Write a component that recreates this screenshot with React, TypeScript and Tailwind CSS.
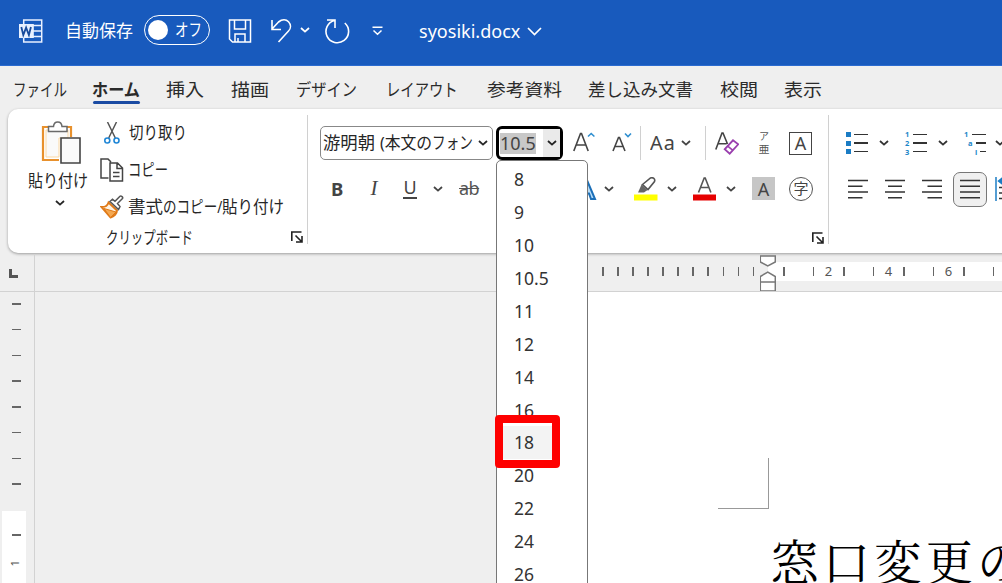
import React, { FunctionComponent, PropsWithChildren, useLayoutEffect, useRef, useState } from "react";

const fontSizes = ["8", "9", "10", "10.5", "11", "12", "14", "16", "18", "20", "22", "24", "26"];

// squeezes a label horizontally so that it fills exactly `width` pixels
const Fit: FunctionComponent<PropsWithChildren<{ width: number; className?: string }>> = ({
  width,
  className = "",
  children,
}) => {
  const ref = useRef<HTMLSpanElement>(null);
  const [scale, setScale] = useState(1);
  useLayoutEffect(() => {
    if (ref.current) setScale(width / ref.current.offsetWidth);
  }, [width]);
  return (
    <span className={"flex shrink-0 " + className} style={{ width }}>
      <span
        ref={ref}
        className="inline-block shrink-0 origin-left whitespace-nowrap"
        style={{ transform: `scaleX(${scale})` }}
      >
        {children}
      </span>
    </span>
  );
};

const Chevron: FunctionComponent<{ className?: string }> = ({ className = "" }) => (
  <svg className={"shrink-0 w-[10px] h-[6px] " + className} viewBox="0 0 10 6" fill="none" stroke="currentColor" strokeWidth="1.8">
    <path d="M1 1l4 3.6L9 1" />
  </svg>
);

const Launcher: FunctionComponent<{ className?: string }> = ({ className = "" }) => (
  <svg className={"shrink-0 w-3 h-3 text-[#222] " + className} viewBox="0 0 12 12" fill="none" stroke="currentColor" strokeWidth="1.6">
    <path d="M.8 10V1h9.7M4.5 4.5l6 6M11 5v6H5" />
  </svg>
);

const TitleBar: FunctionComponent = () => (
  <div className="flex items-center h-[66px] shrink-0 pb-[5px] bg-[#185abd] border-b border-[#2b6bd0] text-white">
    <svg className="ml-[19px] mt-[2px] w-6 h-6 shrink-0" viewBox="0 0 24 24" fill="none" stroke="#e8f0ff" strokeWidth="1.5">
      <path d="M4.7 5V1h18v22h-18v-4M14 6.5h8.7M14 12h8.7M14 17.5h8.7M14 5v14" />
      <rect x="0" y="5" width="14.3" height="14" fill="#e8f0ff" stroke="none" />
      <path d="M2.3 8l2 8 2.8-7.4L9.9 16l2-8" stroke="#174a9c" strokeWidth="1.8" />
    </svg>
    <Fit width={68} className="ml-[22px] mt-px text-[17px]">自動保存</Fit>
    <div className="flex items-center ml-[11px] w-[66px] h-[30px] border-[1.5px] border-white rounded-full">
      <div className="ml-[3px] w-5 h-5 rounded-full bg-white" />
      <Fit width={27} className="ml-[7px] text-[17px]">オフ</Fit>
    </div>
    <svg className="ml-[18px] mt-[2px] w-6 h-6 shrink-0" viewBox="0 0 24 24" fill="none" stroke="currentColor" strokeWidth="1.5">
      <path d="M1.5 1h21v22H4.5l-3-3zM6.5 1v9h11V1M7 23v-8h10v8M10 19v4" />
    </svg>
    <svg className="ml-[18px] mt-[2px] w-6 h-6 shrink-0" viewBox="0 0 24 24" fill="none" stroke="currentColor" strokeWidth="1.6">
      <path d="M2 1v9.5h9M2 10l6.5-7C12 .3 16 .2 18.500 2.700c2.800 3 2.400 6.800 0 9.300L8.500 23" />
    </svg>
    <Chevron className="ml-[6px]" />
    <svg className="ml-[14px] mt-[2px] w-[26px] h-[26px] shrink-0" viewBox="0 0 26 26" fill="none" stroke="currentColor" strokeWidth="1.6">
      <path d="M3 2h8v8M10.500 2.500A11.300 11.300 0 1 0 20.800 5" />
    </svg>
    <svg className="ml-[22px] mt-[2px] w-[11px] h-[10px] shrink-0" viewBox="0 0 11 10" fill="none" stroke="currentColor" strokeWidth="1.5">
      <path d="M.5 1.200h10M1.500 4.500l4 3.700 4-3.700" />
    </svg>
    <Fit width={101} className="ml-[36px] mt-[3px] text-[17.500px]">syosiki.docx</Fit>
    <svg className="ml-[7px] mt-[3px] w-[15px] h-[9px] shrink-0" viewBox="0 0 15 9" fill="none" stroke="currentColor" strokeWidth="1.7">
      <path d="M1 1l6.500 6.500L14 1" />
    </svg>
  </div>
);

const Tabs: FunctionComponent = () => (
  <div className="flex items-center h-[43px] shrink-0 pl-[13px] pt-[3px] text-[17.500px] text-[#2b2b2b]">
    <Fit width={54}>ファイル</Fit>
    <div className="relative ml-[25px]">
      <Fit width={48} className="font-bold">ホーム</Fit>
      <div className="absolute left-px -bottom-[2px] w-[47px] h-[3px] rounded-full bg-[#1a4ba3]" />
    </div>
    <Fit width={38} className="ml-[26px]">挿入</Fit>
    <Fit width={38} className="ml-[27px]">描画</Fit>
    <Fit width={61} className="ml-[27px]">デザイン</Fit>
    <Fit width={72} className="ml-[29px]">レイアウト</Fit>
    <Fit width={75} className="ml-[29px]">参考資料</Fit>
    <Fit width={105} className="ml-[26px]">差し込み文書</Fit>
    <Fit width={38} className="ml-[27px]">校閲</Fit>
    <Fit width={38} className="ml-[26px]">表示</Fit>
  </div>
);

const ClipboardGroup: FunctionComponent = () => (
  <div className="flex flex-col w-[300px] shrink-0 border-r border-[#d0d0d0] mt-[6px] h-[129px] text-[17px] text-[#262626]">
    <div className="flex h-[111px]">
      <div className="flex flex-col w-[84px] pl-[20px] pt-[6px]">
        <svg className="ml-[13px] w-10 h-11" viewBox="0 0 40 44" fill="none">
          <path d="M9 6H2v33h16M24 6h6v10" stroke="#e8912d" strokeWidth="2.200" />
          <path d="M5 9h22v8h-9v19H5z" fill="#fafafa" stroke="#fbd9a5" />
          <path d="M7.500 10.500V5.500h5c.5-6 8-6 8.500 0h5v5z" fill="#fff" stroke="#6a6a6a" strokeWidth="1.500" />
          <path d="M20 17h19v25H20z" fill="#fafafa" stroke="#444" strokeWidth="1.600" />
        </svg>
        <Fit width={60} className="mt-[3px] leading-[26px]">貼り付け</Fit>
        <Chevron className="ml-[27px] mt-[6px]" />
      </div>
      <div className="flex flex-col pl-[8px]">
        <div className="flex items-center h-[36px]">
          <svg className="ml-[4px] w-4 h-[22px]" viewBox="0 0 16 22" fill="none">
            <path d="M3.500 0l7.800 16M12.500 0L4.700 16" stroke="#555" strokeWidth="1.500" />
            <circle cx="3.300" cy="18.500" r="2.500" stroke="#1f86d6" strokeWidth="1.600" />
            <circle cx="12.500" cy="18.500" r="2.500" stroke="#1f86d6" strokeWidth="1.600" />
          </svg>
          <Fit width={58} className="ml-[9px]">切り取り</Fit>
        </div>
        <div className="flex items-center h-[37px]">
          <svg className="w-6 h-6" viewBox="0 0 24 24" fill="none" stroke="#444" strokeWidth="1.500">
            <path d="M8.500 20H1V1h7l3 3M10 5h7.500l5 5v13H10zM17 5v5.500h5.500M13 14.500h6.500M13 18.500h6.500" />
          </svg>
          <Fit width={40} className="ml-[4px]">コピー</Fit>
        </div>
        <div className="flex items-center h-[37px]">
          <svg className="w-6 h-6" viewBox="0 0 24 24" fill="none">
            <path d="M8.500 7.500l8.500 8c0 3-3 6-6.500 7L1.500 12c3 .2 6-1.500 7-4.500z" fill="#fff4e3" stroke="#e07a18" strokeWidth="1.900" />
            <path d="M4 13.500l12 3.500-5.500 5.500z" fill="#f5a850" stroke="#e07a18" />
            <path d="M10 6.500l8.500 8 1.500-3-2.500-3 5-5c1-1-1.500-3.200-2.500-2.200l-5 5-2.500-2z" fill="#fff" stroke="#555" strokeWidth="1.500" />
          </svg>
          <Fit width={35} className="ml-[4px]">書式</Fit>
          <Fit width={59}>のコピー/</Fit>
          <Fit width={62}>貼り付け</Fit>
        </div>
      </div>
    </div>
    <div className="flex items-center h-[24px]">
      <Fit width={87} className="ml-[98px] mt-[2px]">クリップボード</Fit>
      <Launcher className="ml-[98px]" />
    </div>
  </div>
);

const FontGroup: FunctionComponent = () => (
  <div className="flex flex-col w-[521px] shrink-0 border-r border-[#d0d0d0] mt-[6px] h-[129px] text-[#444]">
    <div className="flex items-center mt-[11px] ml-[12px] h-[34px]">
      <div className="flex items-center shrink-0 w-[173px] h-[34px] border border-[#888] rounded-[5px] text-[17px] text-[#262626]">
        <Fit width={52} className="ml-[2px]">游明朝</Fit>
        <Fit width={52} className="ml-[5px]">(本文の</Fit>
        <Fit width={41}>フォン</Fit>
        <Chevron className="ml-[5px]" />
      </div>
      <div className="flex items-center shrink-0 ml-[3px] w-[67px] h-[34px] border-[3px] border-black rounded-[6px] text-[17.5px]">
        <Fit width={36} className="ml-[1px] h-[21px] items-center bg-[#c8c8c8]">10.5</Fit>
        <div className="flex items-center justify-center ml-auto w-[17px] h-full bg-[#eaeaea] text-[#222]">
          <Chevron />
        </div>
      </div>
      <svg className="shrink-0 ml-[10px] w-6 h-6" viewBox="0 0 24 24" fill="none" stroke="currentColor" strokeWidth="1.600">
        <path d="M.8 20L7.500 2.500h1L15.200 20M3.200 14h9.600" />
        <path d="M15 5.500l3.200-3 3.200 3" stroke="#2f8fd0" />
      </svg>
      <svg className="shrink-0 ml-[15px] w-6 h-6" viewBox="0 0 24 24" fill="none" stroke="currentColor" strokeWidth="1.600">
        <path d="M1 20L6.500 6.500h1L13 20M3 15.500h8" />
        <path d="M13 2.500l3 3 3-3" stroke="#2f8fd0" />
      </svg>
      <div className="shrink-0 ml-[4px] w-px h-[34px] bg-[#d0d0d0]" />
      <Fit width={26} className="ml-[9px] text-[19px] tracking-[1px]">Aa</Fit>
      <Chevron className="ml-[5px]" />
      <div className="shrink-0 ml-[14px] w-px h-[34px] bg-[#d0d0d0]" />
      <svg className="shrink-0 ml-[9px] w-6 h-6" viewBox="0 0 24 24" fill="none" stroke="currentColor" strokeWidth="1.600">
        <path d="M.8 18.500L7 2h1l4.500 11M3 12.800h8.500" />
        <path d="M18 9.300l5.300 4-8.600 9.400-5-4.400z" fill="#fff" stroke="#9a3fae" strokeWidth="1.800" />
        <path d="M12.700 15.200l5.200 4.200" stroke="#9a3fae" />
      </svg>
      <div className="flex flex-col items-center gap-[2px] shrink-0 ml-[17px] w-4 text-[10px] leading-[11px] text-[#555]">
        <span>ア</span>
        <span className="scale-x-110">亜</span>
      </div>
      <div className="flex items-center justify-center shrink-0 ml-[17px] w-[23px] h-[23px] border-[1.500px] border-[#444] text-[18px] leading-none">A</div>
    </div>
    <div className="flex items-center mt-[11px] ml-[12px] h-[36px]">
      <span className="shrink-0 ml-[11px] w-[14px] text-[18.500px] font-bold">B</span>
      <span className="shrink-0 ml-[22px] w-[14px] font-['Liberation_Serif'] text-[21px] italic text-center">I</span>
      <div className="shrink-0 ml-[22px] w-[14px] flex flex-col items-center text-[18px] leading-[17px] border-b-2 border-[#444] h-[20px]">U</div>
      <Chevron className="ml-[16px]" />
      <span className="shrink-0 ml-[16px] w-[23px] text-[18px] line-through tracking-[-0.500px] text-[#555]">ab</span>
      <svg className="shrink-0 ml-[91px] w-6 h-6" viewBox="0 0 24 24" fill="none" stroke="#1b6fb8" strokeWidth="2">
        <path d="M1 22L10.500 2h3L22 22h-4l-2-5.500H8" fill="#b7dcf7" />
      </svg>
      <Chevron className="ml-[7px]" />
      <svg className="shrink-0 ml-[20px] w-6 h-6" viewBox="0 0 24 24" fill="none">
        <rect x="0" y="17.500" width="23.500" height="6" fill="#ff0" />
        <path d="M4 15.500l3.500-8 6 5.500-3.500 2.500z" fill="#666" />
        <path d="M8.500 7.500l8-6.500c2.500-1 5 1 4 3.500L14 12.500z" fill="#fff" stroke="#555" strokeWidth="1.600" />
      </svg>
      <Chevron className="ml-[9px]" />
      <svg className="shrink-0 ml-[16px] w-6 h-6" viewBox="0 0 24 24" fill="none">
        <rect x="0" y="17.500" width="23" height="6" fill="#e60000" />
        <path d="M5.500 15.500L11.200 1h1l5.700 14.500M7.500 10.500h8.500" stroke="#555" strokeWidth="1.600" />
      </svg>
      <Chevron className="ml-[9px]" />
      <div className="flex items-center justify-center shrink-0 ml-[16px] w-[23px] h-[23px] bg-[#c6c6c6] text-[18px] leading-none">A</div>
      <div className="flex items-center justify-center shrink-0 ml-[14px] w-6 h-6 border-[1.500px] border-[#555] rounded-full text-[15px] leading-none">字</div>
    </div>
    <Launcher className="ml-[504px] mt-[26px]" />
  </div>
);

const ListIcon: FunctionComponent<{ marks: string[] }> = ({ marks }) => (
  <div className="flex flex-col shrink-0 w-[23px]">
    {marks.map((mark, i) => (
      <div key={i} className="flex items-center h-[8.700px]">
        {mark === "" ? (
          <div className="w-[5px] h-[5px] bg-[#1b7cc4]" />
        ) : (
          <span className="w-[5px] text-[7.500px] leading-[8px] font-bold text-[#1b86c8]">{mark}</span>
        )}
        <div className="ml-[3px] w-[14px] h-[1.500px] bg-[#333]" />
      </div>
    ))}
  </div>
);

const Align: FunctionComponent<{ kind: "left" | "center" | "right" | "both" }> = ({ kind }) => {
  const paths = {
    left: "M0 1.500h20M0 7.200h14.500M0 13h20M0 18.700h14.500",
    center: "M0 1.500h20M3 7.200h14M0 13h20M3 18.700h14",
    right: "M0 1.500h20M5.500 7.200H20M0 13h20M5.500 18.700H20",
    both: "M0 1.500h20M0 7.200h20M0 13h20M0 18.700h20",
  };
  return (
    <svg className="shrink-0 w-5 h-5" viewBox="0 0 20 20" stroke="#333" strokeWidth="1.500">
      <path d={paths[kind]} />
    </svg>
  );
};

const ParagraphGroup: FunctionComponent = () => (
  <div className="flex flex-col mt-[6px] ml-[17px] text-[#333]">
    <div className="flex items-center mt-[11px] h-[34px]">
      <ListIcon marks={["", "", ""]} />
      <Chevron className="ml-[10px]" />
      <div className="ml-[16px]"><ListIcon marks={["1", "2", "3"]} /></div>
      <Chevron className="ml-[10px]" />
      <div className="flex flex-col shrink-0 ml-[16px] w-[23px] text-[7.500px] leading-[8px] font-bold text-[#1b86c8]">
        <div className="flex items-center h-[8.700px]">1<div className="ml-auto mr-px w-[14px] h-[1.500px] bg-[#333]" /></div>
        <div className="flex items-center h-[8.700px] pl-[4px]">a<div className="ml-auto mr-px w-[10px] h-[1.500px] bg-[#333]" /></div>
        <div className="flex items-center h-[8.700px] pl-[11px]">i<div className="ml-auto mr-px w-[6px] h-[1.500px] bg-[#333]" /></div>
      </div>
      <Chevron className="ml-[8px]" />
    </div>
    <div className="flex items-center mt-[11px] ml-[2px] h-[36px]">
      <Align kind="left" />
      <div className="ml-[17px]"><Align kind="center" /></div>
      <div className="ml-[17px]"><Align kind="right" /></div>
      <div className="flex items-center justify-center shrink-0 ml-[11px] w-[34px] h-[35px] border-[1.500px] border-[#777] rounded-[7px] bg-[#f0f0f0]">
        <Align kind="both" />
      </div>
      {/* line spacing, runs off the window edge */}
      <svg className="shrink-0 ml-[8px] w-6 h-6" viewBox="0 0 24 24" fill="none" strokeWidth="1.500">
        <path d="M1 0v24" stroke="#1b7cc4" />
        <path d="M3.500 4L8 .5V7.500zM7 4h8" fill="#1b7cc4" stroke="#1b7cc4" />
        <path d="M4 10.500h18M4 16h18M4 21.500h18" stroke="#333" />
      </svg>
    </div>
  </div>
);

const Ruler: FunctionComponent = () => (
  <div className="flex h-[37px] shrink-0 border-b border-[#d2d2d2]">
    <div className="w-[35px] shrink-0 border-r border-[#d2d2d2] pt-[14px] pl-[9px]">
      <div className="w-[9px] h-[9px] border-l-[3px] border-b-[3px] border-[#555]" />
    </div>
    <div className="flex items-start w-[725px] shrink-0 pl-[567px] pt-[12px]">
      {Array.from({ length: 11 }, (_, i) => (
        <div key={i} className="w-[15.070px] shrink-0">
          <div className="w-[1.500px] h-[9px] bg-[#666]" />
        </div>
      ))}
    </div>
    <svg className="w-4 h-9 shrink-0" viewBox="0 0 16 36" fill="#fff" stroke="#777" strokeWidth="1.500">
      <path d="M8 7h8v19H8z" stroke="none" />
      <path d="M0 1h15v6l-7.500 4L0 7zM0 27v-5.500l7.500-4.500 7.500 4.500V36H0zM0 27h15" transform="translate(.3 0)" />
    </svg>
    <div className="flex items-center grow mt-[7px] h-[19px] bg-white pl-[7px] text-[13px] leading-none text-[#555]">
      <div className="w-[1.500px] h-[9px] bg-[#666] mr-[14px] shrink-0" />
      {["2", "4", "6"].map((n) => (
        <div key={n} className="flex items-center justify-between shrink-0 w-[60px] px-[14px]">
          <div className="w-[1.500px] h-[9px] bg-[#666]" />
          <span>{n}</span>
          <div className="w-[1.500px] h-[9px] bg-[#666]" />
        </div>
      ))}
      <div className="ml-[14px] w-[1.500px] h-[9px] bg-[#666] shrink-0" />
    </div>
  </div>
);

const Document: FunctionComponent = () => (
  <div className="flex grow min-h-0">
    <div className="flex flex-col w-[35px] shrink-0 border-r border-[#d2d2d2] pt-[11px]">
      {Array.from({ length: 8 }, (_, i) => (
        <div key={i} className="h-[25.750px] shrink-0 pl-[12px]">
          <div className="w-[9px] h-[1.500px] bg-[#666]" />
        </div>
      ))}
      <div className="ml-[2px] mt-[2px] w-6 h-[73px] bg-white pl-[10px] pt-[23px]">
        <div className="w-[9px] h-[1.500px] bg-[#666]" />
        <div className="-ml-[3px] mt-[21px] w-[10px] h-[9px] text-[11px] leading-[9px] -rotate-90 text-[#555]">1</div>
      </div>
    </div>
    <div className="w-[505px] shrink-0" />
    <div className="flex flex-col grow bg-white pl-[178px] pt-[166px]">
      <div className="w-[51px] h-[51px] border-r-[1.500px] border-b-[1.500px] border-[#999] shrink-0" />
      <div className="ml-[53px] mt-[25px] text-[47.500px] leading-[52px] tracking-[4px] whitespace-nowrap text-black font-['Noto_Serif_CJK_JP','Noto_Sans_CJK_JP',serif]">
        窓口変更の
      </div>
    </div>
  </div>
);

const SizeMenu: FunctionComponent = () => (
  <div className="absolute left-[496px] top-[160px] w-[92px] h-[440px] pt-[2px] bg-white border border-[#777] rounded-[5px] text-[17.500px] text-[#333]">
    {fontSizes.map((size) => (
      <div key={size} className={"flex items-center h-[32.900px] w-[60px] pl-[17px] " + (size === "18" ? "bg-[#f3f3f3]" : "")}>
        {size}
      </div>
    ))}
  </div>
);

export default function App() {
  return (
    <div className="relative flex flex-col w-[1002px] h-[583px] overflow-hidden bg-[#efefef] font-['Noto_Sans','Noto_Sans_CJK_JP',sans-serif]">
      <TitleBar />
      <Tabs />
      <div className="pl-[8px] h-[146px] shrink-0">
        <div className="flex h-[144px] w-[1010px] bg-white rounded-[10px] shadow-[0_1px_3px_rgba(0,0,0,0.35)]">
          <ClipboardGroup />
          <FontGroup />
          <ParagraphGroup />
        </div>
      </div>
      <Ruler />
      <Document />
      <SizeMenu />
      <div className="absolute left-[495px] top-[415px] w-[65px] h-[53px] border-8 border-[#fe0000] rounded-[4px]" />
    </div>
  );
}
